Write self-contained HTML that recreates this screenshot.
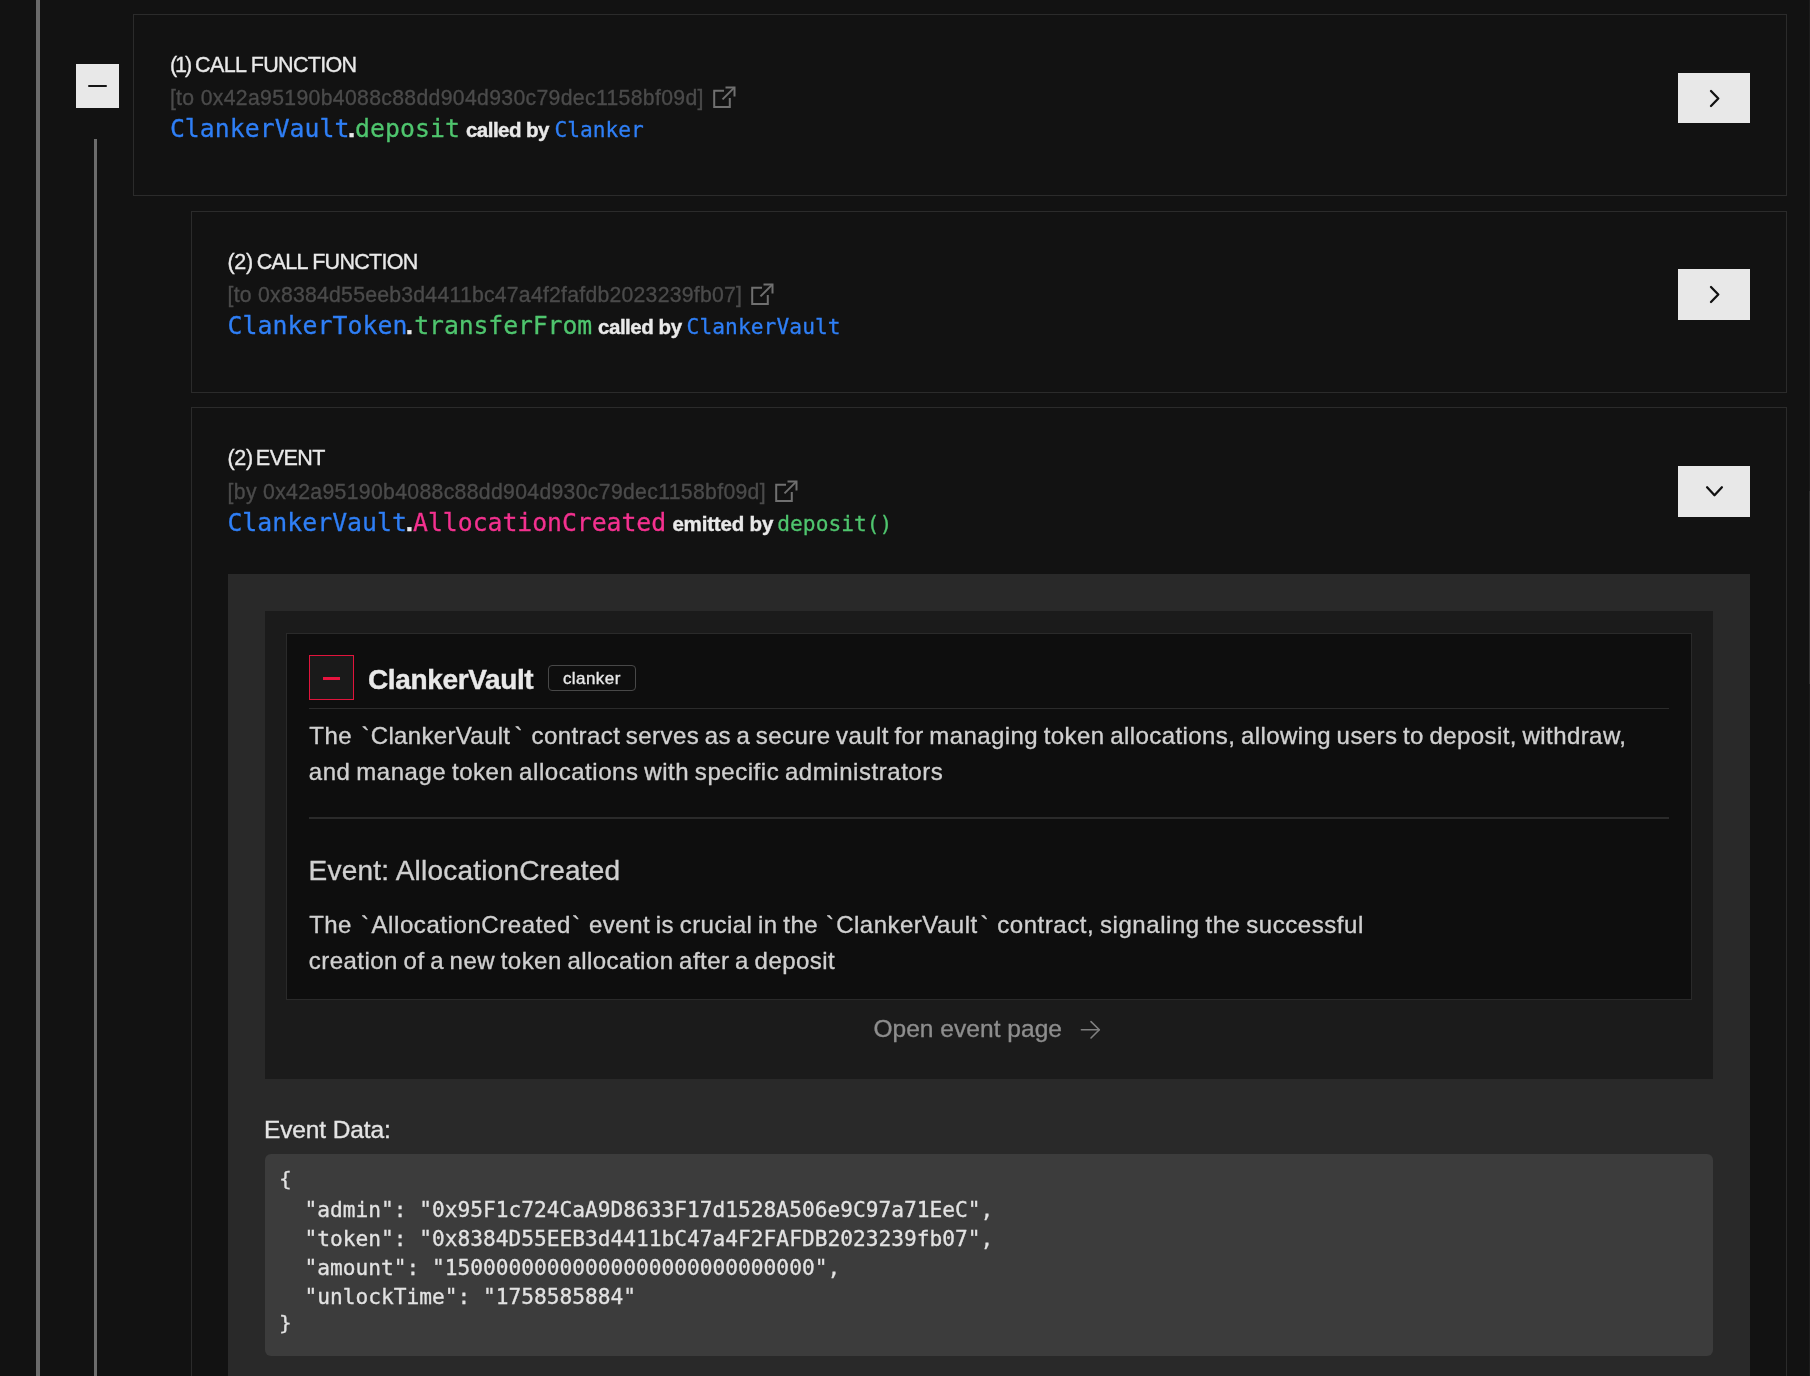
<!DOCTYPE html>
<html lang="en">
<head>
<meta charset="utf-8">
<title>Trace</title>
<style>
*{box-sizing:border-box;margin:0;padding:0}
html,body{width:1810px;height:1376px;overflow:hidden;background:#121212}
body{position:relative;font-family:"Liberation Sans",sans-serif;color:#e9e9e9}
.abs{position:absolute}
.vline1{left:36px;top:0;width:4px;height:1376px;background:#6a6a6a}
.vline2{left:94px;top:139px;width:3px;height:1237px;background:#6c6c6c}
.minus{left:76px;top:64px;width:43px;height:44px;background:#e8e8e8}
.minus i{position:absolute;left:12px;top:21.35px;width:19px;height:2px;border-radius:1px;background:#151515}
.card{border:1px solid #2b2b2b}
.c1{left:133px;top:14px;width:1654px;height:182px}
.c2{left:191px;top:211px;width:1596px;height:182px}
.c3{left:191px;top:407px;width:1596px;height:1000px}
.btn{left:1678px;width:72px;background:#e8e8e8}
.tx{position:absolute;white-space:pre;line-height:1;font-family:"Liberation Sans",sans-serif}
.tx.m{font-family:"DejaVu Sans Mono","Liberation Mono",monospace}
.tx.b{font-weight:700}
.tx{-webkit-text-stroke:0.35px currentColor}
.tx.m{-webkit-text-stroke:0.3px currentColor}
.tx.b{-webkit-text-stroke:0.4px currentColor}
.panel{left:228px;top:574px;width:1522px;height:802px;background:#292929}
.inner{left:265px;top:611px;width:1448px;height:468px;background:#1b1b1b}
.doc{left:286px;top:633px;width:1406px;height:367px;background:#0e0e0e;border:1px solid #2a2a2a}
.rminus{left:309px;top:655px;width:45px;height:45px;border:1px solid #e0143c;background:#1a1a1a}
.rminus i{position:absolute;left:13px;top:21px;width:17px;height:3px;background:#e8143f}
.badge{left:548px;top:665px;width:88px;height:26px;border:1px solid #484848;border-radius:4px}
.hr1{left:309px;top:708px;width:1360px;height:1px;background:#2b2b2b}
.hr2{left:309px;top:817px;width:1360px;height:2px;background:#2a2a2a}
.code{left:265px;top:1154px;width:1448px;height:202px;background:#3c3c3c;border-radius:6px}
.code pre{position:absolute;left:13.9px;top:12px;font-family:"DejaVu Sans Mono","Liberation Mono",monospace;font-size:21.2px;line-height:29px;color:#e2e2e2;-webkit-text-stroke:0.3px currentColor}
.br{display:inline-block;position:relative;transform:scaleY(0.885);transform-origin:0 5px}
.track{left:1809px;top:0;width:1px;height:1376px;background:#1c1c1c}
.sb{left:1809px;top:491px;width:1px;height:193px;background:#303030}
</style>
</head>
<body><div id="root" style="position:absolute;left:0;top:0;width:1810px;height:1376px;will-change:transform">
<div class="abs vline1"></div>
<div class="abs vline2"></div>
<div class="abs minus"><i></i></div>

<div class="abs card c1"></div>
<div class="abs card c2"></div>
<div class="abs card c3"></div>

<svg class="abs" style="left:711px;top:84px" width="28" height="28" viewBox="0 0 28 28" fill="none" stroke="#707070" stroke-width="2"><path d="M13 6.8H3.2v16.3h15.6V14"/><path d="M14.5 3.4h9v9"/><path d="M23.5 3.4L11.5 15.4"/></svg>
<svg class="abs" style="left:749px;top:281px" width="28" height="28" viewBox="0 0 28 28" fill="none" stroke="#707070" stroke-width="2"><path d="M13 6.8H3.2v16.3h15.6V14"/><path d="M14.5 3.4h9v9"/><path d="M23.5 3.4L11.5 15.4"/></svg>
<svg class="abs" style="left:773px;top:478px" width="28" height="28" viewBox="0 0 28 28" fill="none" stroke="#707070" stroke-width="2"><path d="M13 6.8H3.2v16.3h15.6V14"/><path d="M14.5 3.4h9v9"/><path d="M23.5 3.4L11.5 15.4"/></svg>

<div class="abs btn" style="top:73px;height:50px"></div>
<div class="abs btn" style="top:269px;height:51px"></div>
<div class="abs btn" style="top:466px;height:51px"></div>
<svg class="abs" style="left:1700px;top:84px" width="30" height="30" viewBox="0 0 30 30" fill="none" stroke="#111" stroke-width="2.3" stroke-linecap="round" stroke-linejoin="round"><path d="M11 7l7.3 7.5-7.3 7.5"/></svg>
<svg class="abs" style="left:1700px;top:280px" width="30" height="30" viewBox="0 0 30 30" fill="none" stroke="#111" stroke-width="2.3" stroke-linecap="round" stroke-linejoin="round"><path d="M11 7l7.3 7.5-7.3 7.5"/></svg>
<svg class="abs" style="left:1700px;top:476px" width="30" height="30" viewBox="0 0 30 30" fill="none" stroke="#111" stroke-width="2.3" stroke-linecap="round" stroke-linejoin="round"><path d="M7.1 11.3l7.4 7.9 7.4-7.9"/></svg>


<div class="abs panel"></div>
<div class="abs inner"></div>
<div class="abs doc"></div>
<div class="abs rminus"><i></i></div>
<div class="abs badge"></div>
<div class="abs hr1"></div>
<div class="abs hr2"></div>
<svg class="abs" style="left:1078px;top:1018px" width="26" height="24" viewBox="0 0 26 24" fill="none" stroke="#808080" stroke-width="1.6" stroke-linecap="round" stroke-linejoin="round"><path d="M3.4 11.8h17.8"/><path d="M13 3.6l8.3 8.2-8.3 8.2"/></svg>
<div class="abs code"><pre><span class="br">{</span>
  "admin": "0x95F1c724CaA9D8633F17d1528A506e9C97a71EeC",
  "token": "0x8384D55EEB3d4411bC47a4F2FAFDB2023239fb07",
  "amount": "15000000000000000000000000000",
  "unlockTime": "1758585884"
<span class="br" style="top:-0.8px">}</span></pre></div>
<span class="tx" style="left:169.90px;top:55.00px;font-size:21.5px;letter-spacing:-1.950px;color:#e9e9e9">(1)</span>
<span class="tx" style="left:195.10px;top:55.00px;font-size:21.5px;letter-spacing:-0.667px;color:#e9e9e9">CALL FUNCTION</span>
<span class="tx" style="left:169.90px;top:87.00px;font-size:21.2px;letter-spacing:0.337px;color:#4b4b4b">[to 0x42a95190b4088c88dd904d930c79dec1158bf09d]</span>
<span class="tx m" style="left:169.90px;top:116.60px;font-size:24.8px;letter-spacing:0.036px;color:#2f7ff6">ClankerVault</span>
<span class="tx m" style="left:355.10px;top:116.60px;font-size:24.8px;letter-spacing:0.050px;color:#4fc56e">deposit</span>
<span class="tx b" style="left:466.00px;top:119.60px;font-size:20.5px;letter-spacing:-0.537px;color:#e9e9e9">called by</span>
<span class="tx m" style="left:554.50px;top:118.60px;font-size:21.2px;letter-spacing:-0.017px;color:#2f7ff6">Clanker</span>
<span class="tx b" style="left:348.10px;top:114.60px;font-size:26px;letter-spacing:0.000px;color:#e9e9e9">.</span>
<span class="tx" style="left:227.60px;top:252.00px;font-size:21.5px;letter-spacing:-0.400px;color:#e9e9e9">(2)</span>
<span class="tx" style="left:256.80px;top:252.00px;font-size:21.5px;letter-spacing:-0.717px;color:#e9e9e9">CALL FUNCTION</span>
<span class="tx" style="left:227.60px;top:284.00px;font-size:21.2px;letter-spacing:0.252px;color:#4b4b4b">[to 0x8384d55eeb3d4411bc47a4f2fafdb2023239fb07]</span>
<span class="tx m" style="left:227.40px;top:313.80px;font-size:24.8px;letter-spacing:0.082px;color:#2f7ff6">ClankerToken</span>
<span class="tx m" style="left:414.30px;top:313.80px;font-size:24.8px;letter-spacing:-0.118px;color:#4fc56e">transferFrom</span>
<span class="tx b" style="left:598.00px;top:316.80px;font-size:20.5px;letter-spacing:-0.463px;color:#e9e9e9">called by</span>
<span class="tx m" style="left:686.60px;top:315.80px;font-size:21.2px;letter-spacing:0.082px;color:#2f7ff6">ClankerVault</span>
<span class="tx b" style="left:405.80px;top:311.80px;font-size:26px;letter-spacing:0.000px;color:#e9e9e9">.</span>
<span class="tx" style="left:227.60px;top:448.00px;font-size:21.5px;letter-spacing:-0.400px;color:#e9e9e9">(2)</span>
<span class="tx" style="left:255.80px;top:448.00px;font-size:21.5px;letter-spacing:-0.500px;color:#e9e9e9">EVENT</span>
<span class="tx" style="left:227.60px;top:481.00px;font-size:21.2px;letter-spacing:0.333px;color:#4b4b4b">[by 0x42a95190b4088c88dd904d930c79dec1158bf09d]</span>
<span class="tx m" style="left:227.40px;top:510.80px;font-size:24.8px;letter-spacing:0.036px;color:#2f7ff6">ClankerVault</span>
<span class="tx m" style="left:413.10px;top:510.80px;font-size:24.8px;letter-spacing:-0.044px;color:#f3318f">AllocationCreated</span>
<span class="tx b" style="left:672.40px;top:513.80px;font-size:20.5px;letter-spacing:-0.178px;color:#e9e9e9">emitted by</span>
<span class="tx m" style="left:777.30px;top:512.80px;font-size:21.2px;letter-spacing:0.025px;color:#4fc56e">deposit()</span>
<span class="tx b" style="left:405.80px;top:508.80px;font-size:26px;letter-spacing:0.000px;color:#e9e9e9">.</span>
<span class="tx b" style="left:368.00px;top:665.60px;font-size:28px;letter-spacing:-0.364px;color:#e9e9e9">ClankerVault</span>
<span class="tx" style="left:562.90px;top:669.60px;font-size:17px;letter-spacing:0.433px;color:#e9e9e9">clanker</span>
<span class="tx" style="left:309.30px;top:723.80px;font-size:24px;letter-spacing:0.500px;color:#d0d0d0">The</span>
<span class="tx" style="left:361.50px;top:723.80px;font-size:24px;letter-spacing:0.000px;color:#d0d0d0">`</span>
<span class="tx" style="left:370.80px;top:723.80px;font-size:24px;letter-spacing:0.327px;color:#d0d0d0">ClankerVault</span>
<span class="tx" style="left:514.50px;top:723.80px;font-size:24px;letter-spacing:0.000px;color:#d0d0d0">`</span>
<span class="tx" style="left:531.50px;top:723.80px;font-size:24px;letter-spacing:0.425px;word-spacing:-1.5px;color:#d0d0d0">contract serves as a secure vault for managing token allocations, allowing users to deposit, withdraw,</span>
<span class="tx" style="left:308.80px;top:759.70px;font-size:24px;letter-spacing:0.548px;word-spacing:-1.5px;color:#d0d0d0">and manage token allocations with specific administrators</span>
<span class="tx" style="left:308.60px;top:856.70px;font-size:28px;letter-spacing:0.209px;color:#d0d0d0">Event: AllocationCreated</span>
<span class="tx" style="left:309.30px;top:912.90px;font-size:24px;letter-spacing:0.300px;color:#d0d0d0">The</span>
<span class="tx" style="left:361.00px;top:912.90px;font-size:24px;letter-spacing:0.000px;color:#d0d0d0">`</span>
<span class="tx" style="left:371.50px;top:912.90px;font-size:24px;letter-spacing:0.581px;color:#d0d0d0">AllocationCreated</span>
<span class="tx" style="left:572.00px;top:912.90px;font-size:24px;letter-spacing:0.000px;color:#d0d0d0">`</span>
<span class="tx" style="left:589.00px;top:912.90px;font-size:24px;letter-spacing:0.477px;word-spacing:-1.5px;color:#d0d0d0">event is crucial in the</span>
<span class="tx" style="left:826.00px;top:912.90px;font-size:24px;letter-spacing:0.000px;color:#d0d0d0">`</span>
<span class="tx" style="left:836.20px;top:912.90px;font-size:24px;letter-spacing:0.482px;color:#d0d0d0">ClankerVault</span>
<span class="tx" style="left:980.60px;top:912.90px;font-size:24px;letter-spacing:0.000px;color:#d0d0d0">`</span>
<span class="tx" style="left:997.20px;top:912.90px;font-size:24px;letter-spacing:0.558px;word-spacing:-1.5px;color:#d0d0d0">contract, signaling the successful</span>
<span class="tx" style="left:308.80px;top:948.60px;font-size:24px;letter-spacing:0.469px;word-spacing:-1.5px;color:#d0d0d0">creation of a new token allocation after a deposit</span>
<span class="tx" style="left:873.40px;top:1017.00px;font-size:24.5px;letter-spacing:0.043px;color:#8e8e8e">Open event page</span>
<span class="tx" style="left:264.00px;top:1118.00px;font-size:24.5px;letter-spacing:-0.130px;color:#e4e4e4">Event Data:</span>
<div class="abs track"></div>
<div class="abs sb"></div>
</div></body>
</html>
